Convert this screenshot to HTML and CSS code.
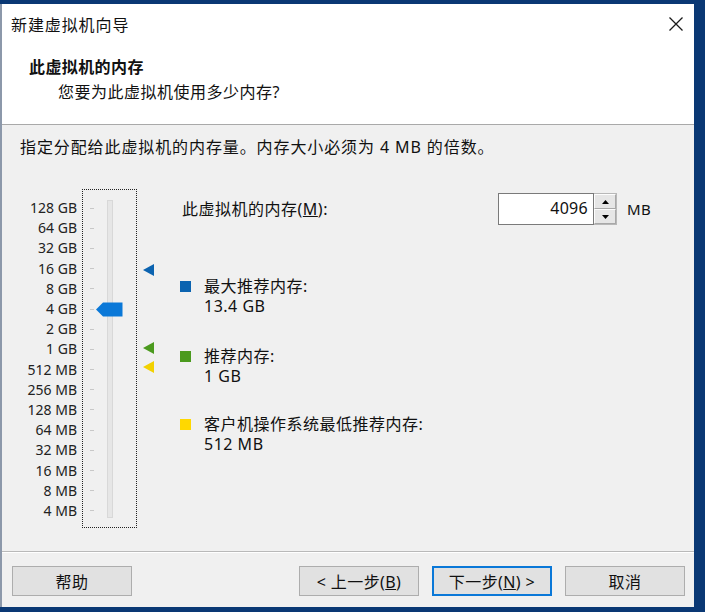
FILE: index.html
```html
<!DOCTYPE html>
<html lang="zh-CN">
<head>
<meta charset="utf-8">
<title>新建虚拟机向导</title>
<link rel="stylesheet" href="styles.css">
</head>
<body>
<div class="dialog">
  <div class="header">
    <div class="titlebar">
      <span class="title">新建虚拟机向导</span>
      <svg class="close" width="16" height="16" viewBox="0 0 16 16"><path d="M1.5 1.5 L14.5 14.5 M14.5 1.5 L1.5 14.5" stroke="#1a1a1a" stroke-width="1.3" fill="none"/></svg>
    </div>
    <div class="page-title">此虚拟机的内存</div>
    <div class="page-sub">您要为此虚拟机使用多少内存?</div>
  </div>
  <div class="content">
    <div class="desc">指定分配给此虚拟机的内存量。内存大小必须为 4 MB 的倍数。</div>
    <div class="main">
      <div class="slider-area">
        <div class="labels">
          <span>128 GB</span><span>64 GB</span><span>32 GB</span><span>16 GB</span>
          <span>8 GB</span><span>4 GB</span><span>2 GB</span><span>1 GB</span>
          <span>512 MB</span><span>256 MB</span><span>128 MB</span><span>64 MB</span>
          <span>32 MB</span><span>16 MB</span><span>8 MB</span><span>4 MB</span>
        </div>
        <div class="slider-box">
          <div class="ticks">
            <i></i><i></i><i></i><i></i><i></i><i></i><i></i><i></i>
            <i></i><i></i><i></i><i></i><i></i><i></i><i></i><i></i>
          </div>
          <div class="track"></div>
          <svg class="thumb" width="27" height="15" viewBox="0 0 27 15"><path d="M0 7.5 L7 0.5 H26.5 V14.5 H7 Z" fill="#0a78d8"/></svg>
        </div>
        <div class="markers">
          <svg class="marker" style="top:75px" width="12" height="12" viewBox="0 0 12 12"><path d="M0 6 L11 0 V12 Z" fill="#0b63b0"/></svg>
          <svg class="marker" style="top:153px" width="12" height="12" viewBox="0 0 12 12"><path d="M0 6 L11 0 V12 Z" fill="#4b9a1e"/></svg>
          <svg class="marker" style="top:172px" width="12" height="12" viewBox="0 0 12 12"><path d="M0 6 L11 0 V12 Z" fill="#f2d100"/></svg>
        </div>
      </div>
      <div class="right">
        <div class="mem-row">
          <span class="mem-label">此虚拟机的内存(<u>M</u>):</span>
          <div class="spin">
            <div class="spin-input">4096</div>
            <div class="spin-btns">
              <div class="spin-btn"><svg width="7" height="4" viewBox="0 0 7 4"><path d="M0 4 L3.5 0 L7 4 Z" fill="#000"/></svg></div>
              <div class="spin-btn"><svg width="7" height="4" viewBox="0 0 7 4"><path d="M0 0 L3.5 4 L7 0 Z" fill="#000"/></svg></div>
            </div>
          </div>
          <span class="unit">MB</span>
        </div>
        <div class="legend l-max">
          <span class="sq blue"></span>
          <div class="legend-text"><div>最大推荐内存:</div><div>13.4 GB</div></div>
        </div>
        <div class="legend l-rec">
          <span class="sq green"></span>
          <div class="legend-text"><div>推荐内存:</div><div>1 GB</div></div>
        </div>
        <div class="legend l-min">
          <span class="sq yellow"></span>
          <div class="legend-text"><div>客户机操作系统最低推荐内存:</div><div>512 MB</div></div>
        </div>
      </div>
    </div>
  </div>
  <div class="footer">
    <button class="btn">帮助</button>
    <div class="spacer"></div>
    <button class="btn">&lt; 上一步(<u>B</u>)</button>
    <button class="btn default">下一步(<u>N</u>) &gt;</button>
    <button class="btn">取消</button>
  </div>
</div>
</body>
</html>
```
FILE: styles.css
```css
* { box-sizing: border-box; }
html, body { margin: 0; padding: 0; }
body {
  background: #0a3874;
  width: 705px;
  height: 612px;
  overflow: hidden;
  font-family: "Noto Sans", "Noto Sans CJK SC", sans-serif;
  color: #111;
}
.dialog {
  margin-top: 4px;
  width: 694px;
  height: 603px;
  background: #f0f0f0;
  border-left: 2px solid #8c98aa;
  display: flex;
  flex-direction: column;
}
.header {
  background: #fff;
  height: 121px;
  border-bottom: 1px solid #a9a9a9;
  flex: none;
}
.titlebar {
  height: 40px;
  display: flex;
  align-items: center;
  justify-content: space-between;
  padding: 0 10px 0 9px;
}
.title {
  font-size: 16px;
  letter-spacing: 0.9px;
  color: #111;
}
.page-title {
  margin-top: 12px;
  padding-left: 27px;
  font-size: 16px;
  font-weight: bold;
  line-height: 22px;
  letter-spacing: 0.4px;
}
.page-sub {
  margin-top: 3px;
  padding-left: 56px;
  font-size: 16px;
  line-height: 22px;
  letter-spacing: 0.5px;
}
.content {
  flex: 1;
  display: flex;
  flex-direction: column;
  border-bottom: 1px solid #b9b9b9;
}
.desc {
  margin-top: 11px;
  padding-left: 18px;
  font-size: 16px;
  line-height: 22px;
  letter-spacing: 0.9px;
}
.main {
  margin-top: 31px;
  display: flex;
}
.slider-area {
  display: flex;
  position: relative;
  width: 172px;
}
.labels {
  width: 75px;
  padding-top: 9px;
  display: flex;
  flex-direction: column;
  align-items: flex-end;
  font-size: 14px;
  line-height: 20.2px;
  color: #222;
}
.slider-box {
  margin-left: 5px;
  width: 55px;
  height: 339px;
  border: 1px dotted #222;
  position: relative;
}
.ticks {
  padding-top: 8px;
  padding-left: 7px;
  display: flex;
  flex-direction: column;
}
.ticks i {
  display: block;
  height: 20.2px;
  width: 4px;
  background: linear-gradient(#c8c8c8, #c8c8c8) no-repeat 0 50% / 4px 1px;
}
.track {
  position: absolute;
  left: 24px;
  top: 10px;
  width: 6px;
  height: 318px;
  background: #e6e6e6;
  border: 1px solid #d8d8d8;
}
.thumb {
  position: absolute;
  left: 13px;
  top: 112px;
}
.markers { position: relative; flex: 1; }
.marker {
  position: absolute;
  left: 6px;
}
.right {
  display: flex;
  flex-direction: column;
  font-size: 16px;
  letter-spacing: 0.5px;
}
.mem-row {
  display: flex;
  align-items: center;
  margin-top: 4px;
  margin-left: 8px;
}
.mem-label {
  width: 316px;
  line-height: 22px;
}
.spin {
  display: flex;
  height: 32px;
}
.spin-input {
  width: 96px;
  height: 32px;
  background: #fff;
  border: 1px solid #7a7a7a;
  text-align: right;
  padding-right: 5px;
  line-height: 29px;
  font-size: 16px;
  letter-spacing: 0.3px;
}
.spin-btns {
  width: 23px;
  display: flex;
  flex-direction: column;
  border: 1px solid #b8b8b8;
  border-left: none;
  background: #f0f0f0;
}
.spin-btn {
  flex: 1;
  display: flex;
  align-items: center;
  justify-content: center;
  background: #e6e6e6;
  border: 1px solid #fdfdfd;
  border-right-color: #a8a8a8;
  border-bottom-color: #a8a8a8;
}
.unit {
  margin-left: 10px;
  font-size: 15px;
}
.legend {
  display: flex;
  margin-left: 6px;
  line-height: 20px;
}
.l-max { margin-top: 51px; }
.l-rec { margin-top: 30px; }
.l-min { margin-top: 28px; }
.sq {
  width: 11px;
  height: 11px;
  margin-top: 5px;
  margin-right: 13px;
  flex: none;
}
.blue { background: #0b63b0; }
.green { background: #4b9a1e; }
.yellow { background: #ffd800; }
.footer {
  height: 55px;
  display: flex;
  align-items: flex-start;
  padding: 13px 9px 0 10px;
  border-top: 1px solid #fff;
}
.spacer { flex: 1; }
.btn {
  width: 120px;
  height: 30px;
  background: #e1e1e1;
  border: 1px solid #adadad;
  font-family: "Noto Sans", "Noto Sans CJK SC", sans-serif;
  font-size: 16px;
  letter-spacing: 0.4px;
  color: #111;
  padding: 0;
  margin-left: 13px;
}
.btn:first-child { margin-left: 0; }
.btn.default {
  border: 2px solid #0a78d8;
}
```
